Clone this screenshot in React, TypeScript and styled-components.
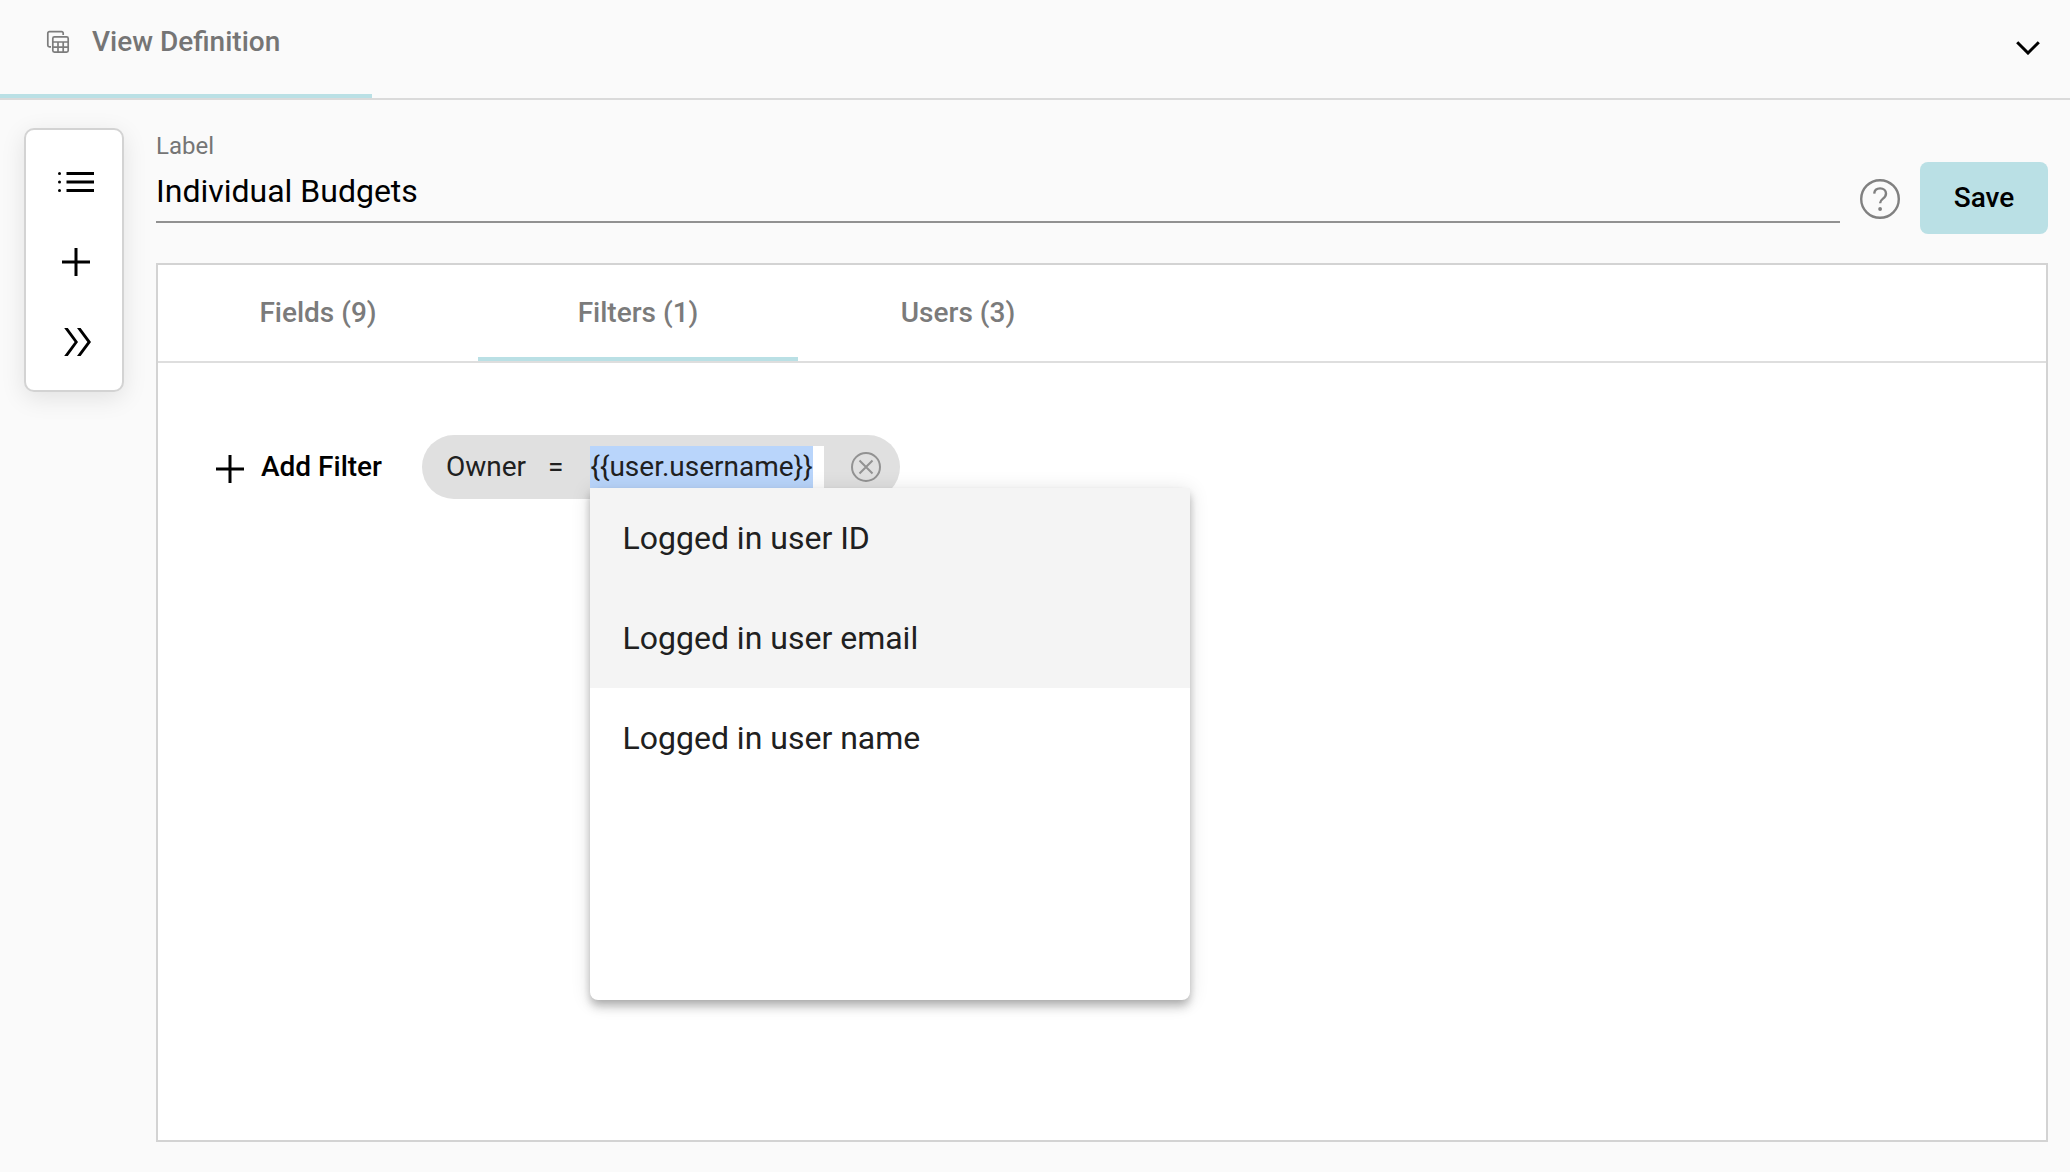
import { useEffect, useRef, useState } from 'react';
import styled, { createGlobalStyle } from 'styled-components';

const GlobalStyle = createGlobalStyle`
  *, *::before, *::after { box-sizing: border-box; }
  body {
    margin: 0;
    background: #fafafa;
    color: #000;
    font-family: Roboto, 'Liberation Sans', sans-serif;
    -webkit-font-smoothing: antialiased;
  }
  button, input { font: inherit; color: inherit; border: 0; padding: 0; margin: 0; background: none; outline: 0; }
  button { cursor: pointer; }
  svg { display: block; flex: none; }
`;

const Page = styled.div`
  min-height: 100vh;
  display: flex;
  flex-direction: column;
`;

const Header = styled.header`
  display: flex;
  justify-content: space-between;
  height: 100px;
  border-bottom: 2px solid #dadada;
`;

const ViewTab = styled.button`
  display: flex;
  align-items: center;
  gap: 22px;
  width: 372px;
  padding: 0 0 12px 46px;
  border-bottom: 4px solid #bae0e5;
  color: #757575;
  font-size: 28px;
  font-weight: 500;
`;

const IconButton = styled.button<{ $size: number; $color?: string }>`
  display: flex;
  align-items: center;
  justify-content: center;
  flex: none;
  width: ${(p) => p.$size}px;
  height: ${(p) => p.$size}px;
  color: ${(p) => p.$color ?? '#000'};
`;

const HeaderActions = styled.div`
  display: flex;
  align-items: center;
  padding: 0 22px 3px 0;
`;

const Body = styled.main`
  flex: 1;
  display: flex;
  align-items: stretch;
  gap: 32px;
  padding: 28px 22px 30px 24px;
`;

const Toolbar = styled.nav`
  align-self: flex-start;
  display: flex;
  flex-direction: column;
  align-items: center;
  width: 100px;
  padding: 12px 0 8px 4px;
  background: #fff;
  border: 2px solid #d3d3d3;
  border-radius: 10px;
  box-shadow: 0 6px 24px rgba(0, 0, 0, 0.1);
`;

const Editor = styled.section`
  flex: 1;
  min-width: 0;
  display: flex;
  flex-direction: column;
  gap: 29px;
`;

const TitleRow = styled.div`
  display: flex;
  align-items: flex-end;
  gap: 20px;
  padding-top: 4px;
`;

const Field = styled.div`
  flex: 1;
  display: flex;
  flex-direction: column;
  gap: 12px;
  margin-bottom: 11px;
  padding-bottom: 11px;
  border-bottom: 2px solid #919191;
`;

const FieldLabel = styled.label`
  color: #757575;
  font-size: 24px;
  line-height: 28px;
`;

const FieldInput = styled.input`
  width: 100%;
  height: 38px;
  font-size: 32px;
  line-height: 38px;
`;

const HelpSlot = styled.div`
  padding-bottom: 15px;
`;

const SaveButton = styled.button`
  width: 128px;
  height: 72px;
  padding-bottom: 2px;
  border-radius: 8px;
  background: #bae0e5;
  font-size: 28px;
  font-weight: 500;
`;

const Panel = styled.div`
  flex: 1;
  background: #fff;
  border: 2px solid #d3d3d3;
`;

const TabBar = styled.div`
  display: flex;
  height: 98px;
  border-bottom: 2px solid #dedede;
`;

const Tab = styled.button<{ $active: boolean }>`
  width: 320px;
  padding-top: 2px;
  border-bottom: 4px solid ${(p) => (p.$active ? '#bae0e5' : 'transparent')};
  color: #7b7b7b;
  font-size: 28px;
  font-weight: 500;
`;

const FilterRow = styled.div`
  display: flex;
  align-items: center;
  gap: 40px;
  padding: 72px 58px;
`;

const AddFilter = styled.button`
  display: flex;
  align-items: center;
  gap: 17px;
  height: 64px;
  padding-bottom: 2px;
  font-size: 28px;
  font-weight: 500;

  svg { margin-top: 6px; }
`;

const Chip = styled.div`
  display: flex;
  align-items: center;
  height: 64px;
  padding: 0 18px 0 24px;
  border-radius: 32px;
  background: #e0e0e0;
  color: #202020;
  font-size: 28px;
`;

const ChipLabel = styled.label`
  padding-bottom: 2px;
`;

const Operator = styled.span`
  padding: 0 27px 2px 22px;
`;

const Combo = styled.div`
  position: relative;
  width: 234px;
  height: 42px;
  margin-right: 26px;
`;

const ComboInput = styled.input`
  width: 100%;
  height: 42px;
  background: #fff;
  line-height: 42px;

  &::selection { background: #b9d5fb; color: #202020; }
`;

const Menu = styled.ul`
  position: absolute;
  z-index: 1;
  top: 100%;
  left: 0;
  width: 600px;
  height: 512px;
  margin: 0;
  padding: 0;
  list-style: none;
  background: #fff;
  border-radius: 0 0 8px 8px;
  box-shadow: 0 4px 8px -2px rgba(0, 0, 0, 0.2), 0 8px 10px rgba(0, 0, 0, 0.14), 0 2px 20px rgba(0, 0, 0, 0.12);
`;

const MenuItem = styled.button<{ $shaded: boolean }>`
  display: block;
  width: 100%;
  height: 100px;
  padding: 0 32px;
  background: ${(p) => (p.$shaded ? '#f4f4f4' : 'transparent')};
  color: #202020;
  font-size: 32px;
  text-align: left;
`;

const TableStackIcon = () => (
  <svg width="24" height="26" viewBox="0 0 24 26" fill="none" stroke="#7c7c7c" strokeWidth="1.7">
    <path d="M17.2 7V5.300a1.600 1.600 0 0 0-1.600-1.600H3.400a1.600 1.600 0 0 0-1.600 1.600v11.900a1.600 1.600 0 0 0 1.600 1.600H5" />
    <rect x="6.800" y="8.800" width="15.400" height="15.400" rx="1.600" />
    <path d="M6.800 14h15.400M6.800 19.100h15.400M12 14v10.200M17.200 14v10.200" />
  </svg>
);

const ChevronDownIcon = () => (
  <svg width="24" height="14" viewBox="0 0 24 14" fill="none" stroke="currentColor" strokeWidth="3">
    <path d="M1.200 1.200 12 12 22.800 1.200" />
  </svg>
);

const ListIcon = () => (
  <svg width="36" height="20" viewBox="0 0 36 20" fill="currentColor">
    <circle cx="1.500" cy="1.600" r="1.500" />
    <circle cx="1.500" cy="10" r="1.500" />
    <circle cx="1.500" cy="18.500" r="1.500" />
    <path d="M8.500 0H36v3H8.500zM8.500 8.500H36v3H8.500zM8.500 17H36v3H8.500z" />
  </svg>
);

const PlusIcon = () => (
  <svg width="28" height="28" viewBox="0 0 28 28" fill="none" stroke="currentColor" strokeWidth="3">
    <path d="M14 0v28M0 14h28" />
  </svg>
);

const DoubleChevronIcon = () => (
  <svg width="28" height="28" viewBox="0 0 28 28" fill="currentColor" overflow="visible">
    <path d="M2.200 0h3.600l10.200 14L5.800 28H2.200l10.400-14zM15 0h3.600l10.400 14-10.400 14H15l10.400-14z" />
  </svg>
);

const HelpIcon = () => (
  <svg width="40" height="40" viewBox="0 0 40 40" fill="none" stroke="currentColor" strokeWidth="2.400">
    <circle cx="20" cy="20" r="18.800" />
    <path d="M14.200 14.600c.3-3.300 2.700-5.200 5.900-5.200 3.500 0 5.900 2.100 5.900 5.100 0 2.200-1 3.600-3 5.100-2.100 1.600-2.900 2.600-2.900 4.700" />
    <circle cx="20.100" cy="30" r="1.900" fill="currentColor" stroke="none" />
  </svg>
);

const CircleCloseIcon = () => (
  <svg width="30" height="30" viewBox="0 0 30 30" fill="none" stroke="currentColor" strokeWidth="2">
    <circle cx="15" cy="15" r="14" />
    <path d="m8.500 8.500 13 13M21.500 8.500l-13 13" />
  </svg>
);

const tabs = ['Fields (9)', 'Filters (1)', 'Users (3)'];
const options = ['Logged in user ID', 'Logged in user email', 'Logged in user name'];

export default function App() {
  const [activeTab, setActiveTab] = useState(1);
  const [label, setLabel] = useState('Individual Budgets');
  const [value, setValue] = useState('{{user.username}}');
  const comboRef = useRef<HTMLInputElement>(null);

  useEffect(() => {
    comboRef.current?.focus();
    comboRef.current?.select();
  }, []);

  return (
    <Page>
      <GlobalStyle />
      <Header>
        <ViewTab type="button">
          <TableStackIcon />
          View Definition
        </ViewTab>
        <HeaderActions>
          <IconButton type="button" $size={40} aria-label="Collapse">
            <ChevronDownIcon />
          </IconButton>
        </HeaderActions>
      </Header>
      <Body>
        <Toolbar>
          <IconButton type="button" $size={80} aria-label="List"><ListIcon /></IconButton>
          <IconButton type="button" $size={80} aria-label="Add"><PlusIcon /></IconButton>
          <IconButton type="button" $size={80} aria-label="Expand"><DoubleChevronIcon /></IconButton>
        </Toolbar>
        <Editor>
          <TitleRow>
            <Field>
              <FieldLabel htmlFor="view-label">Label</FieldLabel>
              <FieldInput id="view-label" value={label} onChange={(e) => setLabel(e.target.value)} />
            </Field>
            <HelpSlot>
              <IconButton type="button" $size={40} $color="#808080" aria-label="Help"><HelpIcon /></IconButton>
            </HelpSlot>
            <SaveButton type="button">Save</SaveButton>
          </TitleRow>
          <Panel>
            <TabBar role="tablist">
              {tabs.map((tab, i) => (
                <Tab key={tab} type="button" role="tab" aria-selected={i === activeTab} $active={i === activeTab} onClick={() => setActiveTab(i)}>
                  {tab}
                </Tab>
              ))}
            </TabBar>
            <FilterRow>
              <AddFilter type="button">
                <PlusIcon />
                Add Filter
              </AddFilter>
              <Chip>
                <ChipLabel htmlFor="owner-value">Owner</ChipLabel>
                <Operator>=</Operator>
                <Combo>
                  <ComboInput ref={comboRef} id="owner-value" value={value} autoComplete="off" onChange={(e) => setValue(e.target.value)} />
                  <Menu>
                    {options.map((option, i) => (
                      <li key={option}>
                        <MenuItem type="button" $shaded={i < 2} onClick={() => setValue(option)}>{option}</MenuItem>
                      </li>
                    ))}
                  </Menu>
                </Combo>
                <IconButton type="button" $size={32} $color="#929292" aria-label="Remove filter"><CircleCloseIcon /></IconButton>
              </Chip>
            </FilterRow>
          </Panel>
        </Editor>
      </Body>
    </Page>
  );
}
